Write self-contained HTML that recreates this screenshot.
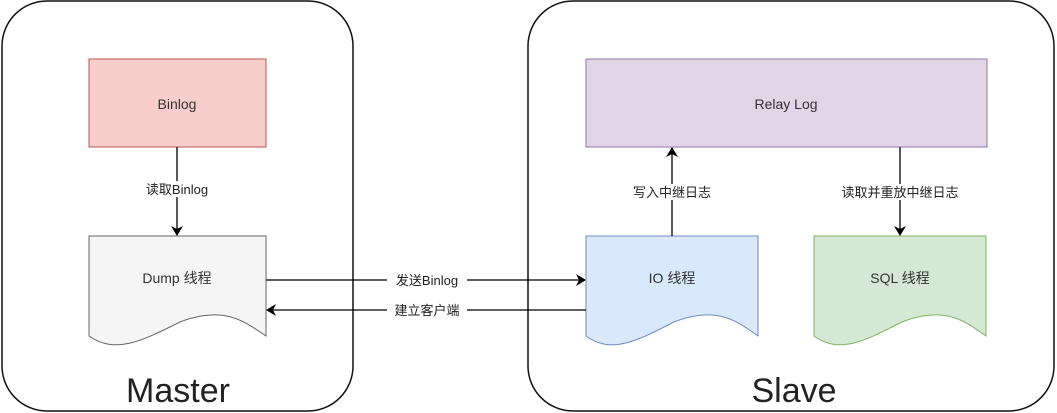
<!DOCTYPE html>
<html><head><meta charset="utf-8"><style>
html,body{margin:0;padding:0;background:#fff;}
svg{display:block;font-family:"Liberation Sans","Noto Sans CJK SC",sans-serif;}
</style></head><body>
<svg width="1057" height="413" viewBox="0 0 1057 413" xmlns="http://www.w3.org/2000/svg">
<defs><marker id="a" markerWidth="10" markerHeight="12" refX="8" refY="6" orient="auto" markerUnits="userSpaceOnUse"><path d="M0,0 L10,6 L0,12 L3,6 Z" fill="#000"/></marker></defs>
<rect x="2" y="1" width="351" height="410" rx="45" fill="#fff" stroke="#111" stroke-width="1.5"/>
<rect x="528" y="1" width="526" height="410" rx="45" fill="#fff" stroke="#111" stroke-width="1.5"/>
<rect x="89" y="59" width="177" height="88" fill="#f8cecc" stroke="#b85450"/>
<text x="177" y="109" font-size="14" text-anchor="middle" fill="#333">Binlog</text>
<rect x="586" y="59" width="401" height="88" fill="#e1d5e7" stroke="#9673a6"/>
<text x="786" y="109" font-size="14" text-anchor="middle" fill="#333">Relay Log</text>
<path d="M89,236 H266 V336 C245,322 225,305 180,322 C140,342 115,354 89,336 Z" fill="#f5f5f5" stroke="#666"/>
<text x="177" y="283" font-size="14" text-anchor="middle" fill="#333">Dump 线程</text>
<path d="M586,236 H758 V336 C738,322 718,305 674,322 C635,342 611,354 586,336 Z" fill="#dae8fc" stroke="#6c8ebf"/>
<text x="672" y="283" font-size="14" text-anchor="middle" fill="#333">IO 线程</text>
<path d="M814,236 H986 V336 C966,322 946,305 902,322 C863,342 839,354 814,336 Z" fill="#d5e8d4" stroke="#82b366"/>
<text x="900" y="283" font-size="14" text-anchor="middle" fill="#333">SQL 线程</text>
<line x1="177" y1="147" x2="177" y2="234" stroke="#000" stroke-width="1.3" marker-end="url(#a)"/>
<rect x="139" y="181" width="76" height="16" fill="#fff"/>
<text x="177" y="194" font-size="13" text-anchor="middle" fill="#222">读取Binlog</text>
<line x1="672" y1="236" x2="672" y2="149" stroke="#000" stroke-width="1.3" marker-end="url(#a)"/>
<rect x="625" y="184" width="94" height="16" fill="#fff"/>
<text x="672" y="197" font-size="13" text-anchor="middle" fill="#222">写入中继日志</text>
<line x1="900" y1="147" x2="900" y2="234" stroke="#000" stroke-width="1.3" marker-end="url(#a)"/>
<rect x="838" y="184" width="124" height="16" fill="#fff"/>
<text x="900" y="197" font-size="13" text-anchor="middle" fill="#222">读取并重放中继日志</text>
<line x1="266" y1="280" x2="584" y2="280" stroke="#000" stroke-width="1.3" marker-end="url(#a)"/>
<rect x="387" y="272" width="80" height="16" fill="#fff"/>
<text x="427" y="285" font-size="13" text-anchor="middle" fill="#222">发送Binlog</text>
<line x1="586" y1="310" x2="268" y2="310" stroke="#000" stroke-width="1.3" marker-end="url(#a)"/>
<rect x="387" y="302" width="80" height="16" fill="#fff"/>
<text x="427" y="315" font-size="13" text-anchor="middle" fill="#222">建立客户端</text>
<text x="178" y="402" font-size="34" text-anchor="middle" fill="#222">Master</text>
<text x="794" y="402" font-size="34" text-anchor="middle" fill="#222">Slave</text>
</svg>
</body></html>
